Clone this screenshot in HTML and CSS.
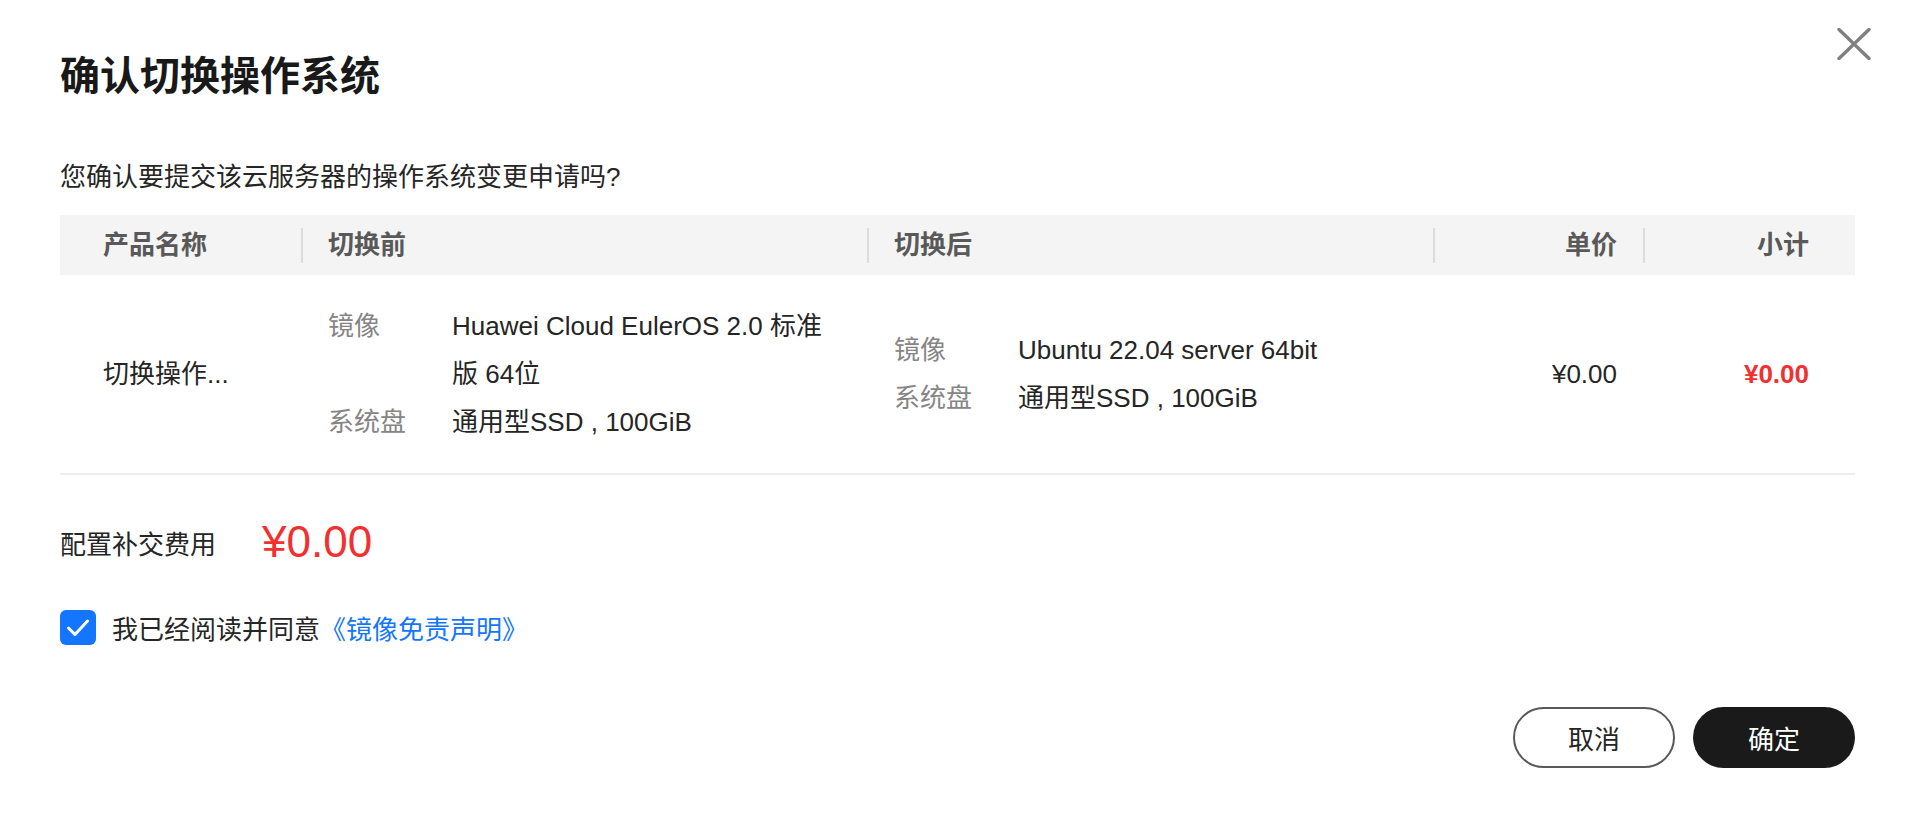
FILE: index.html
```html
<!DOCTYPE html>
<html lang="zh-CN">
<head>
<meta charset="UTF-8">
<meta name="viewport" content="width=device-width, initial-scale=1.0">
<title>确认切换操作系统</title>
<link rel="stylesheet" href="styles.css">
</head>
<body>

<div class="dialog">
    <button class="close-btn" aria-label="关闭">
        <svg width="34" height="32" viewBox="0 0 34 32">
            <path d="M2 1.5 L32 30.5 M32 1.5 L2 30.5" stroke="#808080" stroke-width="3.4" stroke-linecap="round" fill="none"/>
        </svg>
    </button>

    <h2 class="dialog-title">确认切换操作系统</h2>
    <p class="confirm-text">您确认要提交该云服务器的操作系统变更申请吗?</p>

    <table class="order-table">
        <colgroup>
            <col class="col-name">
            <col class="col-spec">
            <col class="col-spec">
            <col class="col-price">
            <col class="col-total">
        </colgroup>
        <thead>
            <tr>
                <th class="cell-name">产品名称</th>
                <th>切换前</th>
                <th>切换后</th>
                <th class="cell-price">单价</th>
                <th class="cell-total">小计</th>
            </tr>
        </thead>
        <tbody>
            <tr>
                <td class="cell-name" title="切换操作系统">切换操作...</td>
                <td>
                    <div class="spec-list">
                        <span class="spec-label">镜像</span>
                        <span class="spec-value">Huawei Cloud EulerOS 2.0 标准版 64位</span>
                        <span class="spec-label">系统盘</span>
                        <span class="spec-value">通用型SSD , 100GiB</span>
                    </div>
                </td>
                <td>
                    <div class="spec-list">
                        <span class="spec-label">镜像</span>
                        <span class="spec-value">Ubuntu 22.04 server 64bit</span>
                        <span class="spec-label">系统盘</span>
                        <span class="spec-value">通用型SSD , 100GiB</span>
                    </div>
                </td>
                <td class="cell-price">¥0.00</td>
                <td class="cell-total"><span class="total-amount">¥0.00</span></td>
            </tr>
        </tbody>
    </table>

    <div class="fee-row">
        <span class="fee-label">配置补交费用</span>
        <span class="fee-amount">¥0.00</span>
    </div>

    <label class="agree-row">
        <span class="checkbox">
            <svg width="36" height="35" viewBox="0 0 36 35">
                <path d="M8.5 18 L15 24.5 L27.5 11" stroke="#fff" stroke-width="3" stroke-linecap="round" stroke-linejoin="round" fill="none"/>
            </svg>
        </span>
        <span class="agree-text">我已经阅读并同意<a href="#" class="agree-link">《镜像免责声明》</a></span>
    </label>

    <div class="dialog-foot">
        <button class="btn btn-ghost">取消</button>
        <button class="btn btn-primary">确定</button>
    </div>
</div>

</body>
</html>
```

FILE: styles.css
```css
* {
    box-sizing: border-box;
}
body {
    margin: 0;
    background-color: #fff;
    font-family: "Liberation Sans", "Noto Sans CJK SC", sans-serif;
    color: #252525;
}

.dialog {
    position: relative;
    padding: 48px 52px 0 60px;
}
/* close icon sits in the top right corner, outside the content box */
.close-btn {
    position: absolute;
    top: 28px;
    right: 36px;
    padding: 0;
    border: none;
    background: none;
    line-height: 0;
    cursor: pointer;
}

.dialog-title {
    margin: 0;
    font-size: 40px;
    line-height: 56px;
    font-weight: bold;
    color: #191919;
}
.confirm-text {
    margin: 55px 0 20px;
    font-size: 26px;
    line-height: 36px;
}

/* order table */
.order-table {
    width: 100%;
    border-collapse: collapse;
    table-layout: fixed;
    font-size: 26px;
}
.col-name { width: 241px; }
.col-spec { width: 566px; }
.col-price { width: 210px; }
.col-total { width: 212px; }

.order-table th {
    height: 60px;
    padding: 0 26px 0 27px;
    background-color: #f4f4f4;
    color: #595959;
    font-weight: bold;
    text-align: left;
    line-height: 36px;
}
.order-table th + th {
    background-image: linear-gradient(#dcdcdc, #dcdcdc);
    background-size: 2px 35px;
    background-repeat: no-repeat;
    background-position: left center;
}
.order-table td {
    padding: 27px 26px 27px 27px;
    border-bottom: 2px solid #eeeeee;
    vertical-align: middle;
    line-height: 48px;
}
.order-table .cell-name {
    padding-left: 43px;
    white-space: nowrap;
}
.order-table .cell-price {
    text-align: right;
}
.order-table .cell-total {
    text-align: right;
    padding-right: 46px;
}

.spec-list {
    display: grid;
    grid-template-columns: 124px 1fr;
}
.spec-label {
    color: #858585;
}
.spec-value {
    color: #252525;
}
.total-amount {
    color: #f23030;
    font-weight: bold;
}

/* fee */
.fee-row {
    display: flex;
    align-items: center;
    gap: 46px;
    height: 60px;
    margin-top: 37px;
}
.fee-label {
    font-size: 26px;
}
.fee-amount {
    font-size: 44px;
    line-height: 60px;
    color: #f23030;
}

/* agreement */
.agree-row {
    display: flex;
    align-items: center;
    gap: 16px;
    height: 36px;
    margin-top: 37px;
    font-size: 26px;
}
.checkbox {
    display: flex;
    width: 36px;
    height: 35px;
    border-radius: 6px;
    background-color: #1476ff;
}
.agree-link {
    color: #1476ff;
    text-decoration: none;
}

/* footer buttons */
.dialog-foot {
    display: flex;
    justify-content: flex-end;
    gap: 18px;
    margin-top: 62px;
}
.btn {
    width: 162px;
    height: 61px;
    border-radius: 31px;
    font-family: inherit;
    font-size: 26px;
    cursor: pointer;
}
.btn-ghost {
    border: 2px solid #595959;
    background-color: #fff;
    color: #252525;
}
.btn-primary {
    border: none;
    background-color: #1a1a1a;
    color: #fff;
}
```
